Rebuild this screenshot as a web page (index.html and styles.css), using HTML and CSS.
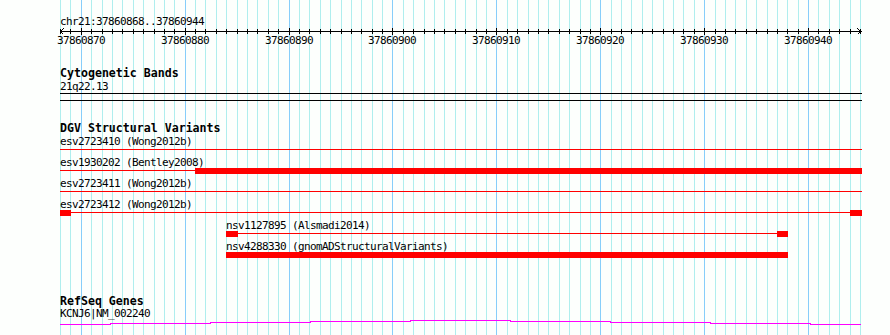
FILE: index.html
```html
<!DOCTYPE html>
<html lang="en">
<head>
  <meta charset="UTF-8">
  <title>chr21:37860868..37860944</title>
  <link rel="stylesheet" href="styles.css">
</head>
<body>
  <div class="browser">
    <!-- base grid, one line per base, darker every 10 bp -->
    <svg class="grid" width="890" height="335">
      <path class="minor" d="M60.5 0V335M70.5 0V335M91.5 0V335M102.5 0V335M112.5 0V335M122.5 0V335M133.5 0V335M143.5 0V335M154.5 0V335M164.5 0V335M174.5 0V335M195.5 0V335M205.5 0V335M216.5 0V335M226.5 0V335M237.5 0V335M247.5 0V335M257.5 0V335M268.5 0V335M278.5 0V335M299.5 0V335M309.5 0V335M320.5 0V335M330.5 0V335M341.5 0V335M351.5 0V335M361.5 0V335M372.5 0V335M382.5 0V335M403.5 0V335M413.5 0V335M424.5 0V335M434.5 0V335M444.5 0V335M455.5 0V335M465.5 0V335M476.5 0V335M486.5 0V335M507.5 0V335M517.5 0V335M528.5 0V335M538.5 0V335M548.5 0V335M559.5 0V335M569.5 0V335M580.5 0V335M590.5 0V335M611.5 0V335M621.5 0V335M631.5 0V335M642.5 0V335M652.5 0V335M663.5 0V335M673.5 0V335M683.5 0V335M694.5 0V335M715.5 0V335M725.5 0V335M735.5 0V335M746.5 0V335M756.5 0V335M767.5 0V335M777.5 0V335M787.5 0V335M798.5 0V335M818.5 0V335M829.5 0V335M839.5 0V335M850.5 0V335M860.5 0V335"/>
      <path class="major" d="M81.5 0V335M185.5 0V335M289.5 0V335M392.5 0V335M496.5 0V335M600.5 0V335M704.5 0V335M808.5 0V335"/>
    </svg>

    <div class="panel">
      <div class="ruler">
        <div class="ref">chr21:37860868..37860944</div>
        <svg class="axis" width="802" height="7">
          <path d="M0.5 1V6M10.5 1V6M31.5 1V6M42.5 1V6M52.5 1V6M62.5 1V6M73.5 1V6M83.5 1V6M94.5 1V6M104.5 1V6M114.5 1V6M135.5 1V6M145.5 1V6M156.5 1V6M166.5 1V6M177.5 1V6M187.5 1V6M197.5 1V6M208.5 1V6M218.5 1V6M239.5 1V6M249.5 1V6M260.5 1V6M270.5 1V6M281.5 1V6M291.5 1V6M301.5 1V6M312.5 1V6M322.5 1V6M343.5 1V6M353.5 1V6M364.5 1V6M374.5 1V6M384.5 1V6M395.5 1V6M405.5 1V6M416.5 1V6M426.5 1V6M447.5 1V6M457.5 1V6M468.5 1V6M478.5 1V6M488.5 1V6M499.5 1V6M509.5 1V6M520.5 1V6M530.5 1V6M551.5 1V6M561.5 1V6M571.5 1V6M582.5 1V6M592.5 1V6M603.5 1V6M613.5 1V6M623.5 1V6M634.5 1V6M655.5 1V6M665.5 1V6M675.5 1V6M686.5 1V6M696.5 1V6M707.5 1V6M717.5 1V6M727.5 1V6M738.5 1V6M758.5 1V6M769.5 1V6M779.5 1V6M790.5 1V6M800.5 1V6"/>
          <path d="M21.5 0V7M125.5 0V7M229.5 0V7M332.5 0V7M436.5 0V7M540.5 0V7M644.5 0V7M748.5 0V7"/>
          <path d="M0 3.5H802M3.5 0.5L0.5 3.5L3.5 6.5M797.5 0.5L800.5 3.5L797.5 6.5"/>
        </svg>
        <div class="scale">
          <span style="left:-3px">37860870</span>
          <span style="left:101px">37860880</span>
          <span style="left:205px">37860890</span>
          <span style="left:308px">37860900</span>
          <span style="left:412px">37860910</span>
          <span style="left:516px">37860920</span>
          <span style="left:620px">37860930</span>
          <span style="left:724px">37860940</span>
        </div>
      </div>

      <section class="track cyto">
        <h2>Cytogenetic Bands</h2>
        <div class="name">21q22.13</div>
        <div class="band"></div>
      </section>

      <section class="track dgv">
        <h2>DGV Structural Variants</h2>
        <div class="feature">
          <div class="name">esv2723410 (Wong2012b)</div>
          <div class="glyph"><span class="connector"></span></div>
        </div>
        <div class="feature">
          <div class="name">esv1930202 (Bentley2008)</div>
          <div class="glyph">
            <span class="connector"></span>
            <span class="block" style="left:135px;width:667px"></span>
          </div>
        </div>
        <div class="feature">
          <div class="name">esv2723411 (Wong2012b)</div>
          <div class="glyph"><span class="connector"></span></div>
        </div>
        <div class="feature">
          <div class="name">esv2723412 (Wong2012b)</div>
          <div class="glyph">
            <span class="connector"></span>
            <span class="block" style="left:0;width:11px"></span>
            <span class="block" style="left:790px;width:12px"></span>
          </div>
        </div>
        <div class="feature" style="margin-left:166px;width:562px">
          <div class="name">nsv1127895 (Alsmadi2014)</div>
          <div class="glyph">
            <span class="connector"></span>
            <span class="block" style="left:0;width:12px"></span>
            <span class="block" style="left:551px;width:11px"></span>
          </div>
        </div>
        <div class="feature" style="margin-left:166px;width:562px">
          <div class="name">nsv4288330 (gnomADStructuralVariants)</div>
          <div class="glyph">
            <span class="block" style="left:0;width:562px"></span>
          </div>
        </div>
      </section>

      <section class="track genes">
        <h2>RefSeq Genes</h2>
        <div class="name">KCNJ6|NM_002240</div>
        <svg class="wiggle" width="802" height="5">
          <path d="M0 4.5H50V3.5H150V2.5H250V1.5H350V0.5H450V1.5H550V2.5H650V3.5H750V4.5H801"/>
        </svg>
      </section>
    </div>
  </div>
</body>
</html>
```

FILE: styles.css
```css
body { margin: 0; background: #fdfffd; color: #000; font: 11px/13px "DejaVu Sans Mono", monospace; letter-spacing: -0.62px; }
.browser { position: relative; width: 890px; height: 335px; overflow: hidden; }
.grid { position: absolute; top: 0; left: 0; shape-rendering: crispEdges; }
.grid .minor { stroke: #afeeee; }
.grid .major { stroke: #87cefa; }
.panel { position: relative; width: 802px; margin-left: 60px; padding-top: 15px; }

.axis { display: block; shape-rendering: crispEdges; }
.axis path { stroke: #000; fill: none; }
.scale { position: relative; height: 13px; margin-top: -1px; }
.scale span { position: absolute; top: 0; }

h2 { margin: 0; font-size: 11.6px; line-height: 13px; font-weight: bold; letter-spacing: 0; }
.cyto { margin-top: 20px; }
.dgv { margin-top: 21px; }
.genes { margin-top: 34px; }

.band { height: 6px; border-top: 1px solid #000; border-bottom: 1px solid #000; }
.feature { height: 21px; }
.glyph { position: relative; height: 6px; margin-top: -1px; }
.connector { position: absolute; left: 0; right: 0; top: 2px; height: 1px; background: #f00; }
.block { position: absolute; top: 0; height: 6px; background: #f00; }

.genes .name { margin-top: -1px; }
.wiggle { display: block; shape-rendering: crispEdges; }
.wiggle path { stroke: #f0f; fill: none; }
```
